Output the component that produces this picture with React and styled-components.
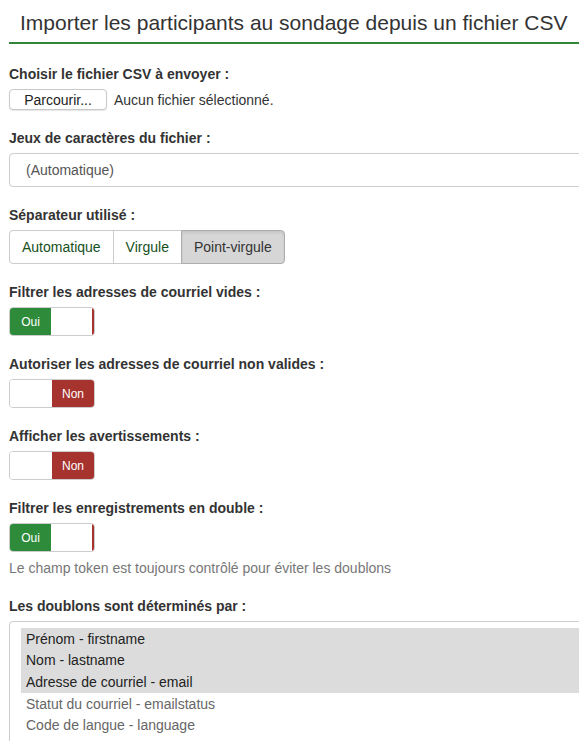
import styled, { createGlobalStyle } from "styled-components";

const GlobalStyle = createGlobalStyle`
  html, body {
    margin: 0;
    padding: 0;
    background: #ffffff;
    overflow: hidden;
  }
  body {
    font-family: "Liberation Sans", Arial, sans-serif;
    color: #333333;
  }
`;

const Page = styled.div`
  width: 640px;
  padding: 0 0 0 9px;
`;

const Header = styled.h3`
  margin: 0;
  padding: 11px 0 8px 11px;
  font-size: 21px;
  font-weight: 400;
  line-height: 23px;
  color: #333333;
  border-bottom: 2px solid #328637;
`;

const Form = styled.div`
  display: flex;
  flex-direction: column;
  padding-top: 22px;
`;

const Group = styled.div`
  display: flex;
  flex-direction: column;
  gap: 6px;
  margin-bottom: ${(props) => props.mb || "20px"};
`;

const Label = styled.label`
  font-size: 14px;
  font-weight: 700;
  line-height: 17px;
  color: #333333;
`;

const FileRow = styled.div`
  display: flex;
  align-items: center;
  gap: 7px;
  font-size: 14px;
`;

const FileButton = styled.button`
  font-family: inherit;
  font-size: 14px;
  color: #222;
  height: 21px;
  width: 98px;
  padding: 0;
  background: #ffffff;
  border: 1px solid #c8c8c8;
  border-radius: 4px;
  box-shadow: 0 1px 1px rgba(0, 0, 0, 0.1);
`;

const SelectBox = styled.div`
  display: flex;
  align-items: center;
  height: 34px;
  padding-left: 16px;
  font-size: 14px;
  color: #555555;
  border: 1px solid #cccccc;
  border-radius: 4px;
  box-sizing: border-box;
`;

const ButtonGroup = styled.div`
  display: flex;
  width: fit-content;
`;

const GroupButton = styled.button`
  font-family: inherit;
  font-size: 14px;
  height: 34px;
  padding: 0 12px;
  margin-left: -1px;
  color: ${(props) => (props.active ? "#333333" : "#16501c")};
  background: ${(props) => (props.active ? "#d6d6d6" : "#ffffff")};
  border: 1px solid ${(props) => (props.active ? "#adadad" : "#cccccc")};
  border-radius: 0;
  box-shadow: ${(props) =>
    props.active ? "inset 0 2px 3px rgba(0,0,0,0.08)" : "none"};
  &:first-child {
    margin-left: 0;
    border-radius: 4px 0 0 4px;
  }
  &:last-child {
    border-radius: 0 4px 4px 0;
  }
`;

const Toggle = styled.div`
  display: flex;
  width: 86px;
  height: 29px;
  border: 1px solid #cccccc;
  border-radius: 4px;
  overflow: hidden;
  box-sizing: border-box;
`;

const ToggleHalf = styled.div`
  flex: 1;
  display: flex;
  align-items: center;
  justify-content: center;
  font-size: 12px;
  color: #ffffff;
  background: ${(props) => props.bg || "#ffffff"};
  border-right: ${(props) => (props.edge ? "2px solid #a8322d" : "none")};
`;

const Help = styled.div`
  font-size: 14px;
  color: #777777;
  margin-top: 2px;
`;

const ListBox = styled.div`
  display: flex;
  flex-direction: column;
  padding: 6px 0 0 11px;
  height: 130px;
  border: 1px solid #cccccc;
  border-radius: 4px;
  box-sizing: border-box;
`;

const Option = styled.div`
  height: 21.6px;
  display: flex;
  align-items: center;
  padding-left: 5px;
  font-size: 14px;
  color: ${(props) => (props.selected ? "#222222" : "#666666")};
  background: ${(props) => (props.selected ? "#dcdcdc" : "transparent")};
`;

function Switch({ on }) {
  return on ? (
    <Toggle>
      <ToggleHalf bg="#2e8b3a">Oui</ToggleHalf>
      <ToggleHalf edge />
    </Toggle>
  ) : (
    <Toggle>
      <ToggleHalf />
      <ToggleHalf bg="#a6332e">Non</ToggleHalf>
    </Toggle>
  );
}

const options = [
  { text: "Prénom - firstname", selected: true },
  { text: "Nom - lastname", selected: true },
  { text: "Adresse de courriel - email", selected: true },
  { text: "Statut du courriel - emailstatus", selected: false },
  { text: "Code de langue - language", selected: false },
];

export default function App() {
  return (
    <Page>
      <GlobalStyle />
      <Header>Importer les participants au sondage depuis un fichier CSV</Header>
      <Form>
        <Group>
          <Label>Choisir le fichier CSV à envoyer :</Label>
          <FileRow>
            <FileButton>Parcourir...</FileButton>
            <span>Aucun fichier sélectionné.</span>
          </FileRow>
        </Group>
        <Group>
          <Label>Jeux de caractères du fichier :</Label>
          <SelectBox>(Automatique)</SelectBox>
        </Group>
        <Group>
          <Label>Séparateur utilisé :</Label>
          <ButtonGroup>
            <GroupButton>Automatique</GroupButton>
            <GroupButton>Virgule</GroupButton>
            <GroupButton active>Point-virgule</GroupButton>
          </ButtonGroup>
        </Group>
        <Group>
          <Label>Filtrer les adresses de courriel vides :</Label>
          <Switch on />
        </Group>
        <Group>
          <Label>Autoriser les adresses de courriel non valides :</Label>
          <Switch />
        </Group>
        <Group>
          <Label>Afficher les avertissements :</Label>
          <Switch />
        </Group>
        <Group mb="22px">
          <Label>Filtrer les enregistrements en double :</Label>
          <Switch on />
          <Help>Le champ token est toujours contrôlé pour éviter les doublons</Help>
        </Group>
        <Group>
          <Label>Les doublons sont déterminés par :</Label>
          <ListBox>
            {options.map((o) => (
              <Option key={o.text} selected={o.selected}>
                {o.text}
              </Option>
            ))}
          </ListBox>
        </Group>
      </Form>
    </Page>
  );
}
